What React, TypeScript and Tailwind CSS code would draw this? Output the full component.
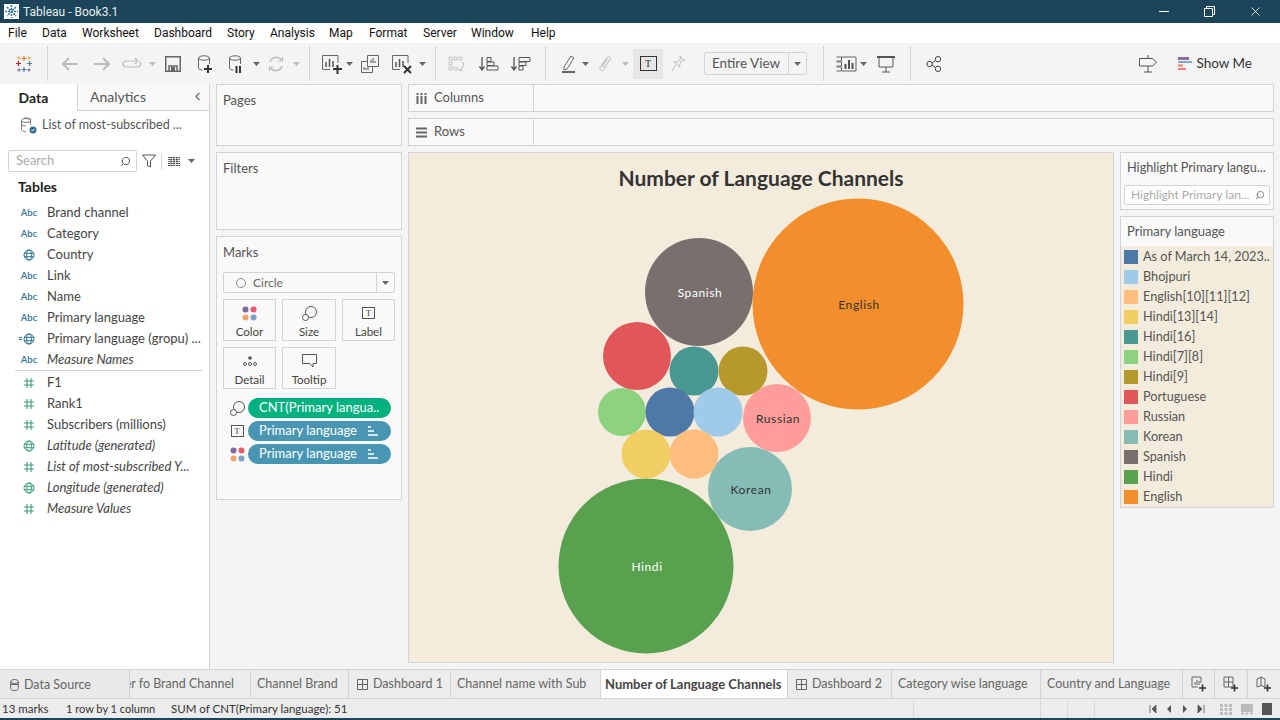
import { ReactNode } from 'react';
import { ChevronLeft, Search, X } from 'lucide-react';

const MENU = [
  ['File', 'w-[34px]'],
  ['Data', 'w-[40px]'],
  ['Worksheet', 'w-[72px]'],
  ['Dashboard', 'w-[73px]'],
  ['Story', 'w-[43px]'],
  ['Analysis', 'w-[59px]'],
  ['Map', 'w-[40px]'],
  ['Format', 'w-[54px]'],
  ['Server', 'w-[48px]'],
  ['Window', 'w-[60px]'],
  ['Help', 'w-[40px]'],
];

const FIELDS_DIM = [
  ['abc', 'Brand channel', false],
  ['abc', 'Category', false],
  ['globe', 'Country', false],
  ['abc', 'Link', false],
  ['abc', 'Name', false],
  ['abc', 'Primary language', false],
  ['group', 'Primary language (gropu) ...', false],
  ['abc', 'Measure Names', true],
] as const;

const FIELDS_MEAS = [
  ['hash', 'F1', false],
  ['hash', 'Rank1', false],
  ['hash', 'Subscribers (millions)', false],
  ['globe', 'Latitude (generated)', true],
  ['hash', 'List of most-subscribed Y...', true],
  ['globe', 'Longitude (generated)', true],
  ['hash', 'Measure Values', true],
] as const;

const LEGEND = [
  ['As of March 14, 2023..', 'bg-[#4e79a7]'],
  ['Bhojpuri', 'bg-[#a0cbe8]'],
  ['English[10][11][12]', 'bg-[#ffbe7d]'],
  ['Hindi[13][14]', 'bg-[#f1ce63]'],
  ['Hindi[16]', 'bg-[#499894]'],
  ['Hindi[7][8]', 'bg-[#8cd17d]'],
  ['Hindi[9]', 'bg-[#b6992d]'],
  ['Portuguese', 'bg-[#e15759]'],
  ['Russian', 'bg-[#ff9d9a]'],
  ['Korean', 'bg-[#86bcb6]'],
  ['Spanish', 'bg-[#79706e]'],
  ['Hindi', 'bg-[#59a14f]'],
  ['English', 'bg-[#f28e2b]'],
];

const BUBBLES = [
  { x: 858, y: 304, r: 105.5, c: '#f28e2b', t: 'English', f: '#333' },
  { x: 699, y: 292, r: 54, c: '#79706e', t: 'Spanish', f: '#fff' },
  { x: 646, y: 566, r: 87.5, c: '#59a14f', t: 'Hindi', f: '#fff' },
  { x: 750, y: 489, r: 42, c: '#86bcb6', t: 'Korean', f: '#333' },
  { x: 777, y: 418, r: 34, c: '#ff9d9a', t: 'Russian', f: '#333' },
  { x: 637, y: 356, r: 34, c: '#e15759' },
  { x: 694, y: 371, r: 24.5, c: '#499894' },
  { x: 743, y: 371, r: 24.5, c: '#b6992d' },
  { x: 622, y: 412, r: 24, c: '#8cd17d' },
  { x: 670, y: 412, r: 24.5, c: '#4e79a7' },
  { x: 718, y: 412, r: 24.5, c: '#a0cbe8' },
  { x: 646, y: 454, r: 24.5, c: '#f1ce63' },
  { x: 694, y: 454, r: 24.5, c: '#ffbe7d' },
];

function Svg({ w = 20, h = 20, children, cls = '' }: { w?: number; h?: number; children: ReactNode; cls?: string }) {
  return (
    <svg width={w} height={h} viewBox={`0 0 ${w} ${h}`} fill="none" className={cls}>
      {children}
    </svg>
  );
}

function Caret({ light = false }: { light?: boolean }) {
  return (
    <svg width="7" height="4" viewBox="0 0 7 4">
      <path d="M0 0h7L3.5 4z" fill={light ? '#bbb' : '#666'} />
    </svg>
  );
}

function Sep() {
  return <div className="w-px h-[35px] bg-[#d4d4d4]" />;
}

// one toolbar slot, fixed width so the icons land where they do in the app
function Slot({ w, children }: { w: string; children?: ReactNode }) {
  return <div className={`${w} h-full flex items-center justify-center shrink-0`}>{children}</div>;
}

function Toolbar() {
  const sw = '#666';
  return (
    <div className="h-[41px] bg-[#f4f4f4] flex items-center shrink-0">
      <Slot w="w-[47px]">
        <Svg w={18} h={18}>
          <path d="M9 1v5M6.500 3.500h5" stroke="#e8762b" strokeWidth="1.200" />
          <path d="M9 12v5M6.500 14.500h5" stroke="#4e79a7" strokeWidth="1.200" />
          <path d="M3.500 6v5M1 8.500h5" stroke="#c72035" strokeWidth="1.200" />
          <path d="M14.500 6v5M12 8.500h5" stroke="#5b879b" strokeWidth="1.200" />
          <path d="M4 1.500v3M2.500 3h3M14 1.500v3M12.500 3h3" stroke="#e8a02b" strokeWidth="1" />
          <path d="M4 13.500v3M2.500 15h3M14 13.500v3M12.500 15h3" stroke="#6a4c93" strokeWidth="1" />
        </Svg>
      </Slot>
      <Sep />
      <Slot w="w-[5px]" />
      <Slot w="w-[34px]">
        <Svg w={18} h={16}><path d="M17 8H2M8 2L2 8l6 6" stroke="#bbb" strokeWidth="2" /></Svg>
      </Slot>
      <Slot w="w-[30px]">
        <Svg w={18} h={16}><path d="M1 8h15M10 2l6 6-6 6" stroke="#bbb" strokeWidth="2" /></Svg>
      </Slot>
      <Slot w="w-[29px]">
        <Svg w={20} h={14}><path d="M14 4H4a3 3 0 000 6h12a3 3 0 002-5M13 1l3 3-3 3" stroke="#bbb" strokeWidth="1.200" /></Svg>
      </Slot>
      <Slot w="w-[12px]"><Caret light /></Slot>
      <Slot w="w-[30px]">
        <Svg w={16} h={16}><path d="M.75.75h14.500v14.500H.75zM4 15v-5h8v5" stroke={sw} strokeWidth="1.500" /><rect x="6" y="11" width="4" height="4" fill={sw} /></Svg>
      </Slot>
      <Slot w="w-[33px]">
        <Svg w={16} h={18}><ellipse cx="7" cy="3" rx="5.500" ry="2.200" stroke={sw} /><path d="M1.500 3v10c0 1.200 1.500 2 4 2M12.500 3v6" stroke={sw} /><path d="M7 14h8M11 10v8" stroke="#333" strokeWidth="2" /></Svg>
      </Slot>
      <Slot w="w-[30px]">
        <Svg w={16} h={18}><ellipse cx="7" cy="3" rx="5.500" ry="2.200" stroke={sw} /><path d="M1.500 3v10c0 1.200 1.500 2 4 2M12.500 3v6" stroke={sw} /><path d="M8.500 11v7M12 11v7" stroke="#333" strokeWidth="2" /></Svg>
      </Slot>
      <Slot w="w-[10px]"><Caret /></Slot>
      <Slot w="w-[30px]">
        <Svg w={18} h={18}><path d="M3 7a6.500 6.500 0 0111.500-2M15 11A6.500 6.500 0 013.500 13" stroke="#bbb" strokeWidth="1.500" /><path d="M15.500 2v4h-4M2.500 16v-4h4" stroke="#bbb" strokeWidth="1.200" /></Svg>
      </Slot>
      <Slot w="w-[10px]"><Caret light /></Slot>
      <Slot w="w-[8px]" />
      <Sep />
      <Slot w="w-[10px]" />
      <Slot w="w-[24px]">
        <Svg w={22} h={20}><path d="M17 9V1.500H1.500v14H9" stroke={sw} /><g stroke="#555" strokeWidth="1.500"><path d="M5 13V8M8.500 13V5M12 13V7" /></g><path d="M12 15h9M16.500 11v9" stroke="#333" strokeWidth="2" /></Svg>
      </Slot>
      <Slot w="w-[10px]"><Caret /></Slot>
      <Slot w="w-[32px]">
        <Svg w={18} h={18}><path d="M6.500.5h11v11h-11zM.5 6.500H6M.5 6.500v11h11V12" stroke={sw} /><path d="M10 8V5M12 8V3M14 8V6M3 15v-3M5 15v-2M7 15v-3" stroke="#555" /></Svg>
      </Slot>
      <Slot w="w-[31px]">
        <Svg w={22} h={20}><path d="M17 9V1.500H1.500v14H9" stroke={sw} /><g stroke="#555" strokeWidth="1.500"><path d="M5 13V8M8.500 13V5M12 13V7" /></g><path d="M13 12l7 7M20 12l-7 7" stroke="#333" strokeWidth="2" /></Svg>
      </Slot>
      <Slot w="w-[10px]"><Caret /></Slot>
      <Slot w="w-[8px]" />
      <Sep />
      <Slot w="w-[5px]" />
      <Slot w="w-[32px]">
        <Svg w={18} h={16}><path d="M1 1h3v3H1zM6 1h3v3H6zM11 1h3v3h-3zM1 6h3v3H1zM1 11h3v3H1zM6 11h3v3H6z" stroke="#c4c4c4" /><path d="M15 6c1 3 0 6-3 8M10.500 12l1 2.500 3 0" stroke="#bbb" /></Svg>
      </Slot>
      <Slot w="w-[32px]">
        <Svg w={20} h={16}><path d="M3 1v12M.500 10.500L3 14l2.500-3.500" stroke="#555" strokeWidth="1.300" /><path d="M8 1.500h4v4H8zM8 6h7v3.500H8zM8 10h11v4H8z" stroke="#555" /></Svg>
      </Slot>
      <Slot w="w-[32px]">
        <Svg w={20} h={16}><path d="M3 1v12M.500 10.500L3 14l2.500-3.500" stroke="#555" strokeWidth="1.300" /><path d="M8 1.500h11v4H8zM8 6h7v3.500H8zM8 10h4v4H8z" stroke="#555" /></Svg>
      </Slot>
      <Slot w="w-[8px]" />
      <Sep />
      <Slot w="w-[12px]" />
      <Slot w="w-[21px]">
        <Svg w={14} h={20}><path d="M2 13L9 2l3 2-7 11-3 1z" stroke={sw} /><rect x="0" y="17" width="13" height="2" fill="#666" /></Svg>
      </Slot>
      <Slot w="w-[12px]"><Caret /></Slot>
      <Slot w="w-[28px]">
        <Svg w={14} h={18}><path d="M3.500 11L9 2.500c1.200-1.800 4-.3 3 1.800L6 14.500c-1.500 2.500-5.200.5-4-2L7.500 4.500c.6-1 2-.3 1.500.8L4.500 12.500" stroke="#bbb" strokeWidth="1" /></Svg>
      </Slot>
      <Slot w="w-[12px]"><Caret light /></Slot>
      <Slot w="w-[2px]" />
      <div className="w-[30px] h-[30px] bg-[#e6e6e6] flex items-center justify-center shrink-0">
        <div className="w-[17px] h-[15px] border border-[#333] flex items-center justify-center text-[10px] leading-none text-[#333] font-['Liberation_Serif',serif]">T</div>
      </div>
      <Slot w="w-[29px]">
        <Svg w={14} h={17}><path d="M9 1l4.500 4.500-3 .5-2 4 .5 2.500-6-6 3 .5 3.500-2.500zM4.500 10L1 16" stroke="#bbb" /></Svg>
      </Slot>
      <Slot w="w-[12px]" />
      <div className="w-[103px] h-[23px] border border-[#d4d4d4] rounded-[2px] flex items-center shrink-0">
        <span className="flex-1 pl-[7px] text-[13.500px] text-[#555]">Entire View</span>
        <div className="w-[18px] h-full border-l border-[#d4d4d4] flex items-center justify-center"><Caret /></div>
      </div>
      <Slot w="w-[16px]" />
      <Sep />
      <Slot w="w-[11px]" />
      <Slot w="w-[23px]">
        <Svg w={22} h={16}><path d="M.5 1h5v4h-5M.5 6h5v4h-5M.5 11h5v4h-5M6 1h14v14H6" stroke={sw} /><path d="M9.500 13V8M13 13V4M16.500 13V7" stroke="#555" strokeWidth="2" /></Svg>
      </Slot>
      <Slot w="w-[11px]"><Caret /></Slot>
      <Slot w="w-[33px]">
        <Svg w={18} h={18}><path d="M0 2h18" stroke="#555" strokeWidth="2" /><path d="M2 2v10h14V2M9 12v5M5 17h8" stroke="#555" /></Svg>
      </Slot>
      <Slot w="w-[8px]" />
      <Sep />
      <Slot w="w-[5px]" />
      <Slot w="w-[35px]">
        <Svg w={16} h={16}><circle cx="3.500" cy="8" r="2.700" stroke="#444" /><circle cx="12" cy="3.200" r="2.700" stroke="#444" /><circle cx="12" cy="12.800" r="2.700" stroke="#444" /><path d="M6 6.800l3.700-2.300M6 9.200l3.700 2.300" stroke="#444" /></Svg>
      </Slot>
      <div className="flex-1" />
      <Svg w={18} h={18} cls="mr-[21px]">
        <path d="M9 0v3M9 11v6M5 17h8M.5 3.500h13l4 3.500-4 4H.5z" stroke="#555" />
      </Svg>
      <div className="flex flex-col gap-px mr-[4px] w-[14px]">
        <div className="h-[2.500px] w-[11px] bg-[#8a6f9e]" />
        <div className="h-[2.500px] w-[14px] bg-[#82a8cd]" />
        <div className="h-[2.500px] w-[5px] bg-[#f4a582]" />
        <div className="h-[2.500px] w-[8px] bg-[#f27c80]" />
      </div>
      <span className="text-[13.500px] text-[#333] mr-[28px]">Show Me</span>
    </div>
  );
}

function FieldIcon({ kind, measure }: { kind: string; measure: boolean }) {
  const c = measure ? '#3d9e7a' : '#2f7390';
  if (kind === 'abc') {
    return <span className="text-[9.500px] font-semibold text-[#2f7390] leading-none">Abc</span>;
  }
  if (kind === 'hash') {
    return (
      <Svg w={12} h={12}>
        <path d="M4 1v10M8 1v10M1 4h10M1 8h10" stroke={c} strokeWidth="1.100" />
      </Svg>
    );
  }
  const globe = (
    <Svg w={12} h={12}>
      <circle cx="6" cy="6" r="5" stroke={c} />
      <ellipse cx="6" cy="6" rx="2.300" ry="5" stroke={c} />
      <path d="M1 4.300h10M1 7.700h10" stroke={c} />
    </Svg>
  );
  if (kind === 'group') {
    return (
      <span className="flex items-center -ml-[5px] gap-px">
        <span className="w-[3px] h-[3px] border-y border-[#2f7390]" />
        {globe}
      </span>
    );
  }
  return globe;
}

function FieldRow({ kind, name, italic, measure }: { kind: string; name: string; italic: boolean; measure: boolean }) {
  return (
    <div className="h-[21px] flex items-center">
      <div className="w-[47px] pl-[16px] pr-[5px] flex justify-center shrink-0">
        <FieldIcon kind={kind} measure={measure} />
      </div>
      <span className={`text-[13px] text-[#444] whitespace-nowrap ${italic ? 'italic' : ''}`}>{name}</span>
    </div>
  );
}

function DataPane() {
  return (
    <div className="w-[210px] h-full bg-white border-r border-[#d4d4d4] flex flex-col shrink-0">
      <div className="h-[27px] flex shrink-0">
        <div className="w-[77px] flex items-center justify-center text-[14px] font-bold text-[#222] pr-[10px] pb-[1px]">Data</div>
        <div className="flex-1 border-l border-b border-[#d4d4d4] bg-[#f9f9f9] flex items-center pl-[12px] text-[14px] text-[#555] pb-[1px]">
          <span className="flex-1">Analytics</span>
          <ChevronLeft size={13} className="mr-[5px] text-[#666]" />
        </div>
      </div>
      <div className="h-[29px] flex items-center pl-[20px] shrink-0">
        <Svg w={18} h={18} cls="mr-[4px]">
          <ellipse cx="6" cy="3.500" rx="4.500" ry="2" stroke="#777" />
          <path d="M1.500 3.500v9c0 1 1 2 4.500 2M10.500 3.500v4M1.500 7c0 1 2 2 4.500 2M4 1c2 0 7 0 7 2" stroke="#777" />
          <circle cx="13" cy="13" r="3.500" fill="#2f7390" />
          <path d="M11.500 13l1 1 2-2" stroke="#fff" />
        </Svg>
        <span className="text-[12.500px] text-[#555]">List of most-subscribed ...</span>
      </div>
      <div className="h-[10px] shrink-0" />
      <div className="h-[22px] flex items-center pl-[8px] shrink-0">
        <div className="w-[129px] h-[22px] border border-[#d4d4d4] rounded-[2px] flex items-center justify-between pl-[7px] pr-[5px]">
          <span className="text-[13px] text-[#aaa]">Search</span>
          <Search size={11} className="text-[#555] -scale-x-100" />
        </div>
        <Svg w={14} h={14} cls="ml-[5px]"><path d="M.5 1h13L8.500 7v6l-3-1.500V7z" stroke="#555" /></Svg>
        <div className="w-px h-[17px] bg-[#d4d4d4] ml-[5px]" />
        <Svg w={12} h={9} cls="ml-[6px]"><path d="M0 .5h12M0 2.500h12M0 4.500h12M0 6.500h12M0 8.500h12M3 0v9M6 0v9M9 0v9" stroke="#555" strokeWidth="1" strokeDasharray="2 .6" /></Svg>
        <div className="ml-[8px] flex"><Caret /></div>
      </div>
      <div className="h-[30px] flex items-center pl-[18px] text-[14px] font-bold text-[#222] shrink-0 pb-[1px]">Tables</div>
      {FIELDS_DIM.map(([k, n, i]) => (
        <FieldRow key={n} kind={k} name={n} italic={i} measure={false} />
      ))}
      <div className="h-px bg-[#d4d4d4] ml-[15px] mr-[7px] mb-px" />
      {FIELDS_MEAS.map(([k, n, i]) => (
        <FieldRow key={n} kind={k} name={n} italic={i} measure />
      ))}
    </div>
  );
}

function Card({ title, cls, children }: { title: string; cls: string; children?: ReactNode }) {
  return (
    <div className={`${cls} bg-[#f9f9f9] border border-[#d4d4d4] px-[6px] shrink-0`}>
      <div className="text-[13px] text-[#555] h-[30px] pt-[1px] flex items-center">{title}</div>
      {children}
    </div>
  );
}

const dots = (
  <Svg w={15} h={15}>
    <circle cx="3.500" cy="3.500" r="3" fill="#7b6a96" />
    <circle cx="11.500" cy="3.500" r="3" fill="#e8596c" />
    <circle cx="3.500" cy="11.500" r="3" fill="#f2a36e" />
    <circle cx="11.500" cy="11.500" r="3" fill="#7f9fc6" />
  </Svg>
);
const sizeIcon = (
  <Svg w={15} h={15}>
    <circle cx="9" cy="6" r="5.500" stroke="#555" fill="#f9f9f9" />
    <circle cx="3.500" cy="11.500" r="3" stroke="#555" fill="#f9f9f9" />
  </Svg>
);
const tIcon = (
  <div className="w-[13px] h-[12px] border border-[#555] flex items-center justify-center text-[9px] leading-none text-[#444] font-['Liberation_Serif',serif]">T</div>
);

function MarkBtn({ label, w, icon }: { label: string; w: string; icon: ReactNode }) {
  return (
    <div className={`${w} h-[42px] border border-[#d4d4d4] flex flex-col items-center justify-between pt-[5px] pb-[1px]`}>
      <div className="h-[16px] flex items-center">{icon}</div>
      <span className="text-[11.500px] leading-[14px] text-[#444]">{label}</span>
    </div>
  );
}

function Pill({ icon, text, green = false }: { icon: ReactNode; text: string; green?: boolean }) {
  return (
    <div className="h-[20px] flex items-center mb-[3px]">
      <div className="w-[25px] flex justify-center shrink-0 pl-[3px]">{icon}</div>
      <div className={`w-[143px] h-[20px] rounded-full flex items-center pl-[11px] pr-[12px] ${green ? 'bg-[#00b180]' : 'bg-[#4996b2]'}`}>
        <span className="flex-1 text-[13px] text-white whitespace-nowrap overflow-hidden">{text}</span>
        {!green && (
          <Svg w={11} h={10}>
            <path d="M0 1h3M0 5h6M0 9h10" stroke="#fff" strokeWidth="1.500" />
          </Svg>
        )}
      </div>
    </div>
  );
}

function SideCards() {
  return (
    <div className="w-[186px] flex flex-col gap-[6px] shrink-0">
      <Card title="Pages" cls="h-[62px]" />
      <Card title="Filters" cls="h-[78px]" />
      <Card title="Marks" cls="h-[264px]">
        <div className="mt-[5px] w-[172px] h-[21px] border border-[#d4d4d4] rounded-[2px] flex items-center">
          <div className="w-[10px] h-[10px] rounded-full border border-[#888] ml-[12px] mr-[7px]" />
          <span className="flex-1 text-[12px] text-[#666]">Circle</span>
          <div className="w-[18px] h-full border-l border-[#d4d4d4] flex items-center justify-center"><Caret /></div>
        </div>
        <div className="mt-[6px] flex gap-[6px]">
          <MarkBtn label="Color" w="w-[53px]" icon={dots} />
          <MarkBtn label="Size" w="w-[54px]" icon={sizeIcon} />
          <MarkBtn label="Label" w="w-[53px]" icon={tIcon} />
        </div>
        <div className="mt-[6px] flex gap-[6px]">
          <MarkBtn
            label="Detail"
            w="w-[53px]"
            icon={
              <Svg w={14} h={12}>
                <circle cx="7" cy="3" r="1.800" fill="#555" />
                <circle cx="2" cy="9" r="1.500" stroke="#555" />
                <circle cx="7" cy="9" r="1.500" stroke="#555" />
                <circle cx="12" cy="9" r="1.500" stroke="#555" />
              </Svg>
            }
          />
          <MarkBtn
            label="Tooltip"
            w="w-[54px]"
            icon={
              <Svg w={15} h={14}>
                <path d="M.5.5h14v9H11V13L8 9.500H.5z" stroke="#555" />
              </Svg>
            }
          />
        </div>
        <div className="mt-[9px]">
          <Pill icon={sizeIcon} text="CNT(Primary langua.." green />
          <Pill icon={tIcon} text="Primary language" />
          <Pill icon={dots} text="Primary language" />
        </div>
      </Card>
    </div>
  );
}

function Shelf({ label, icon }: { label: string; icon: ReactNode }) {
  return (
    <div className="h-[28px] bg-[#f9f9f9] border border-[#d4d4d4] flex shrink-0">
      <div className="w-[125px] border-r border-[#d4d4d4] flex items-center shrink-0">
        <div className="w-[25px] flex justify-center">{icon}</div>
        <span className="text-[13px] text-[#555]">{label}</span>
      </div>
    </div>
  );
}

function Chart() {
  return (
    <div className="w-[706px] h-[511px] shrink-0 border border-[#d4d4d4] bg-[#f3ecdc] overflow-hidden">
      <svg width="704" height="509" viewBox="409 153 704 509">
        <text x="761" y="186" textAnchor="middle" fontSize="21" fontWeight="700" fill="#333">
          Number of Language Channels
        </text>
        {BUBBLES.map((b) => (
          <g key={b.c}>
            <circle cx={b.x} cy={b.y} r={b.r} fill={b.c} />
            {b.t && (
              <text x={b.x + 1} y={b.y + 5} textAnchor="middle" fontSize="12" letterSpacing=".6" fill={b.f}>
                {b.t}
              </text>
            )}
          </g>
        ))}
      </svg>
    </div>
  );
}

function Legend() {
  return (
    <div className="w-[154px] flex flex-col gap-[6px] shrink-0">
      <div className="h-[58px] bg-[#f9f9f9] border border-[#d4d4d4] px-[3px]">
        <div className="h-[32px] pb-[2px] flex items-center pl-[3px] text-[12.700px] text-[#555] whitespace-nowrap">Highlight Primary langu...</div>
        <div className="h-[20px] bg-white border border-[#d4d4d4] rounded-[2px] flex items-center justify-between pl-[6px] pr-[4px]">
          <span className="text-[12px] text-[#aaa] whitespace-nowrap">Highlight Primary lan...</span>
          <Search size={10} className="text-[#777] -scale-x-100" />
        </div>
      </div>
      <div className="h-[292px] bg-[#f3ecdc] border border-[#d4d4d4]">
        <div className="h-[29px] bg-[#f9f9f9] flex items-center pl-[6px] text-[13px] text-[#555] mb-[1px]">Primary language</div>
        {LEGEND.map(([name, color]) => (
          <div key={name} className="h-[20px] flex items-center pl-[3px]">
            <div className={`w-[14px] h-[14px] ${color} shrink-0`} />
            <span className="ml-[5px] text-[12.700px] text-[#555] whitespace-nowrap">{name}</span>
          </div>
        ))}
      </div>
    </div>
  );
}

function Tab({ cls, label, icon, active = false }: { cls: string; label: string; icon?: ReactNode; active?: boolean }) {
  return (
    <div
      className={`${cls} h-full shrink-0 flex items-center overflow-hidden whitespace-nowrap border-r border-[#d4d4d4] pt-[1px] ${active ? 'bg-white font-bold text-[13px] text-[#444]' : 'bg-[#ececec] text-[12.500px] text-[#666]'}`}
    >
      {icon}
      {label}
    </div>
  );
}

const gridIcon = (
  <Svg w={11} h={11} cls="mr-[5px] shrink-0">
    <path d="M.5.500h10v10H.5zM.5 5.500h10M5.500.500v10" stroke="#666" />
  </Svg>
);

function TabBar() {
  return (
    <div className="h-[30px] flex bg-[#ececec] border-y border-[#d4d4d4] shrink-0">
      <div className="w-[130px] h-full flex items-center pl-[10px] pt-[2px] shrink-0 text-[12.500px] text-[#666] bg-[#e9e9e9] border-r border-[#d4d4d4]">
        <Svg w={9} h={12} cls="mr-[5px]"><ellipse cx="4.500" cy="2.500" rx="3.800" ry="2" stroke="#666" /><path d="M.7 2.500v7c0 1 1.500 2 3.800 2s3.800-1 3.800-2v-7M.7 5.500h7.600" stroke="#666" /></Svg>
        Data Source
      </div>
      <Tab cls="w-[121px] justify-end pr-[16px]" label="er fo Brand Channel" />
      <Tab cls="w-[98px] pl-[6px]" label="Channel Brand" />
      <Tab cls="w-[102px] pl-[8px]" label="Dashboard 1" icon={gridIcon} />
      <Tab cls="w-[150px] pl-[6px]" label="Channel name with Sub" />
      <Tab cls="w-[187px] pl-[4px]" label="Number of Language Channels" active />
      <Tab cls="w-[104px] pl-[8px]" label="Dashboard 2" icon={gridIcon} />
      <Tab cls="w-[149px] pl-[6px]" label="Category wise language" />
      <Tab cls="w-[142px] pl-[6px]" label="Country and Language" />
      <div className="w-[32px] h-full flex items-center justify-center border-r border-[#d4d4d4] shrink-0">
        <Svg w={16} h={16}><path d="M9 1H1v10h6M9 1h1v6" stroke="#666" /><path d="M4 9V6M6 9V4M8 9V5" stroke="#666" /><path d="M8 12h7M11.500 8.500v7" stroke="#333" strokeWidth="1.600" /></Svg>
      </div>
      <div className="w-[33px] h-full flex items-center justify-center border-r border-[#d4d4d4] shrink-0">
        <Svg w={16} h={16}><path d="M1 1h9v10H1zM1 6h9M5.500 1v10" stroke="#666" /><path d="M8 12h7M11.500 8.500v7" stroke="#333" strokeWidth="1.600" /></Svg>
      </div>
      <div className="flex-1 h-full flex items-center justify-center">
        <Svg w={16} h={16}><path d="M1 3l4-2 4 2v8l-4-1.500L1 11zM5 1v8.500" stroke="#666" /><path d="M8 12h7M11.500 8.500v7" stroke="#333" strokeWidth="1.600" /></Svg>
      </div>
    </div>
  );
}

function StatusBar() {
  return (
    <div className="h-[19px] bg-[#ececec] flex items-center text-[11.500px] text-[#333] shrink-0 pt-[1px]">
      <span className="w-[66px] pl-[2px]">13 marks</span>
      <span className="w-[105px] text-[11px]">1 row by 1 column</span>
      <span className="w-[742px] whitespace-nowrap">SUM of CNT(Primary language): 51</span>
      <div className="w-px h-full bg-[#d9d9d9]" />
      <div className="w-[126px]" />
      <div className="w-px h-full bg-[#d9d9d9]" />
      <div className="w-[26px]" />
      <div className="w-px h-full bg-[#d9d9d9]" />
      <div className="w-[26px]" />
      <div className="w-px h-full bg-[#d9d9d9]" />
      <div className="w-[56px] flex items-center justify-between ml-[54px]">
        <Svg w={8} h={8}><path d="M1 0v8M7 0v8L3 4z" stroke="#555" fill="#555" strokeWidth=".8" /></Svg>
        <Svg w={6} h={8}><path d="M5 0v8L1 4z" fill="#555" /></Svg>
        <Svg w={6} h={8}><path d="M1 0v8l4-4z" fill="#555" /></Svg>
        <Svg w={8} h={8}><path d="M7 0v8M1 0v8l4-4z" stroke="#555" fill="#555" strokeWidth=".8" /></Svg>
      </div>
      <Svg w={12} h={11} cls="ml-[15px]"><path d="M0 1.500h12M0 5.500h12M0 9.500h12" stroke="#bbb" strokeWidth="3" strokeDasharray="3 1.500" /></Svg>
      <Svg w={12} h={11} cls="ml-[9px]"><path d="M0 0h12v8H0z" fill="#bbb" /><path d="M0 9.500h12" stroke="#bbb" strokeWidth="2" strokeDasharray="3 1.500" /></Svg>
      <div className="w-[10px] h-[12px] ml-[9px] bg-[#555]" />
    </div>
  );
}

export default function App() {
  return (
    <div className="w-[1280px] h-[720px] overflow-hidden flex flex-col bg-[#f4f4f4] font-['Lato',sans-serif]">
      <div className="h-[23px] bg-[#1c4559] flex items-center shrink-0 text-white">
        <div className="w-[23px] h-[23px] flex items-center justify-center">
          <div className="w-[15px] h-[15px] bg-white flex items-center justify-center">
            <Svg w={13} h={13}>
              <path d="M6.500 0v13M0 6.500h13M2 2l9 9M11 2l-9 9" stroke="#2f7390" strokeWidth="1.500" strokeDasharray="2 1" />
            </Svg>
          </div>
        </div>
        <span className="text-[12px] text-[#e8eef1] font-['Roboto',sans-serif]">Tableau - Book3.1</span>
        <div className="flex-1" />
        <div className="w-[10px] h-px bg-white mr-[35px]" />
        <Svg w={11} h={11} cls="mr-[33px]"><path d="M.5 2.500h8v8h-8zM2.500 2.500v-2h8v8h-2" stroke="#fff" /></Svg>
        <X size={15} strokeWidth={1.300} className="mr-[17px] text-white" />
      </div>
      <div className="h-[20px] bg-white flex items-center pl-[8px] shrink-0 text-[12px] text-[#111] font-['Roboto',sans-serif]">
        {MENU.map(([name, w]) => (
          <span key={name} className={w}>{name}</span>
        ))}
      </div>
      <Toolbar />
      <div className="flex-1 min-h-0 flex">
        <DataPane />
        <div className="flex-1 flex gap-[6px] pl-[6px] pr-[6px]">
          <SideCards />
          <div className="flex-1 flex flex-col gap-[6px]">
            <Shelf
              label="Columns"
              icon={<Svg w={11} h={11}><path d="M1.500 0v11M5.500 0v11M9.500 0v11" stroke="#666" strokeWidth="2" strokeDasharray="2 1 8" /></Svg>}
            />
            <Shelf
              label="Rows"
              icon={<Svg w={11} h={11}><path d="M0 1.500h11M0 5.500h11M0 9.500h11" stroke="#666" strokeWidth="2" /></Svg>}
            />
            <div className="flex gap-[6px]">
              <Chart />
              <Legend />
            </div>
          </div>
        </div>
      </div>
      <TabBar />
      <StatusBar />
      <div className="h-[2px] bg-[#1c4559] shrink-0" />
    </div>
  );
}
